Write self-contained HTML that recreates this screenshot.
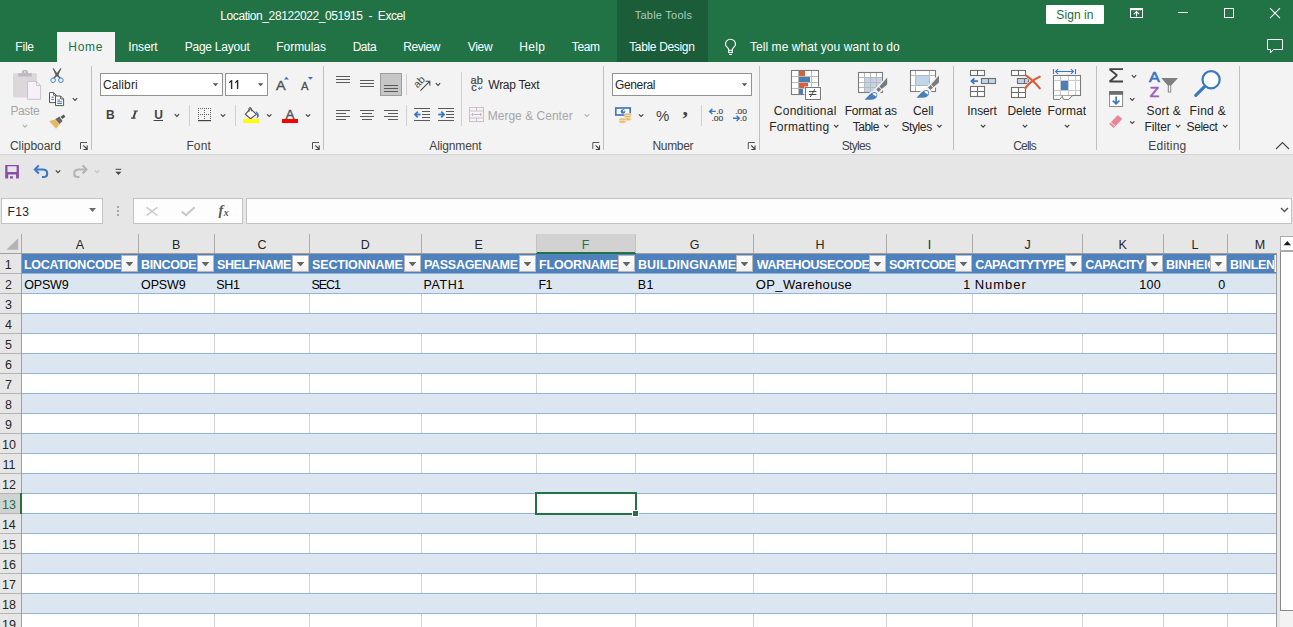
<!DOCTYPE html>
<html>
<head>
<meta charset="utf-8">
<title>Excel</title>
<style>
html,body{margin:0;padding:0;}
body{width:1293px;height:627px;overflow:hidden;position:relative;background:#e6e6e6;font-family:"Liberation Sans",sans-serif;font-size:12px;color:#262626;}
.t{position:absolute;white-space:nowrap;line-height:16px;height:16px;}
.b{position:absolute;}
svg{position:absolute;overflow:visible;}
.sep{position:absolute;width:1px;background:#bebebe;top:66px;height:84px;}
.sp2{position:absolute;width:1px;background:#d0d0d0;top:105px;height:21px;}
.combo{position:absolute;background:#fff;border:1px solid #939393;box-sizing:border-box;top:73px;height:23px;}
.fbox{position:absolute;background:#fdfdfd;border:1px solid #c3c3c3;box-sizing:border-box;top:198px;height:26px;}
.fb{position:absolute;top:255px;width:17px;height:17px;background:linear-gradient(#ffffff,#f1f1f1);border:1px solid #b9b9b9;box-sizing:border-box;}
.fb:after{content:"";position:absolute;left:3.6px;top:6px;width:7.8px;height:4.4px;background:#666;clip-path:polygon(0 0,100% 0,50% 100%);}
</style>
</head>
<body>
<!-- title / tabs -->
<div class="b" style="left:0;top:0;width:1293px;height:62px;background:#217346;"></div>
<div class="b" style="left:617px;top:0;width:91px;height:62px;background:#1b5d39;"></div>
<div class="b" style="left:57px;top:32px;width:58px;height:30px;background:#f3f3f3;"></div>
<div class="b" style="left:1046px;top:5px;width:58px;height:19px;background:#fff;border-radius:1px;"></div>
<!-- ribbon -->
<div class="b" style="left:0;top:62px;width:1293px;height:92px;background:#f3f3f3;"></div>
<div class="b" style="left:0;top:154px;width:1293px;height:1px;background:#d4d4d4;"></div>
<div class="sep" style="left:91px"></div>
<div class="sep" style="left:323px"></div>
<div class="sep" style="left:603px"></div>
<div class="sep" style="left:759px"></div>
<div class="sep" style="left:953px"></div>
<div class="sep" style="left:1096px"></div>
<div class="sep" style="left:1239px"></div>
<div class="sp2" style="left:189px"></div>
<div class="sp2" style="left:235px"></div>
<div class="sp2" style="left:406px;top:74px;"></div>
<div class="sp2" style="left:406px;"></div>
<div class="sp2" style="left:461px;top:72px;height:54px;"></div>
<div class="sp2" style="left:701px"></div>
<div class="combo" style="left:100px;width:123px;"></div>
<div class="combo" style="left:225px;width:43px;"></div>
<div class="combo" style="left:612px;width:140px;"></div>
<div class="b" style="left:380px;top:73px;width:22px;height:23px;background:#c6c6c6;border:1px solid #9d9d9d;box-sizing:border-box;"></div>
<!-- formula bar -->
<div class="fbox" style="left:1px;width:102px;"></div>
<div class="fbox" style="left:133px;width:110px;"></div>
<div class="fbox" style="left:246px;width:1046px;"></div>
<div style="position:absolute;left:22px;top:254px;width:1254px;height:373px;background:#fff;"></div>
<div style="position:absolute;left:537px;top:234px;width:98px;height:18px;background:#d2d2d2;"></div>
<div style="position:absolute;left:536px;top:252px;width:100px;height:2px;background:#217346;"></div>
<div style="position:absolute;left:0;top:253px;width:536px;height:1px;background:#9f9f9f;"></div>
<div style="position:absolute;left:636px;top:253px;width:641px;height:1px;background:#9f9f9f;"></div>
<div style="position:absolute;left:21px;top:234px;width:1px;height:19px;background:#ababab;"></div>
<div style="position:absolute;left:138px;top:234px;width:1px;height:19px;background:#ababab;"></div>
<div style="position:absolute;left:214px;top:234px;width:1px;height:19px;background:#ababab;"></div>
<div style="position:absolute;left:309px;top:234px;width:1px;height:19px;background:#ababab;"></div>
<div style="position:absolute;left:421px;top:234px;width:1px;height:19px;background:#ababab;"></div>
<div style="position:absolute;left:536px;top:234px;width:1px;height:19px;background:#c2c2c2;"></div>
<div style="position:absolute;left:635px;top:234px;width:1px;height:19px;background:#c2c2c2;"></div>
<div style="position:absolute;left:753px;top:234px;width:1px;height:19px;background:#ababab;"></div>
<div style="position:absolute;left:886px;top:234px;width:1px;height:19px;background:#ababab;"></div>
<div style="position:absolute;left:972px;top:234px;width:1px;height:19px;background:#ababab;"></div>
<div style="position:absolute;left:1082px;top:234px;width:1px;height:19px;background:#ababab;"></div>
<div style="position:absolute;left:1163px;top:234px;width:1px;height:19px;background:#ababab;"></div>
<div style="position:absolute;left:1227px;top:234px;width:1px;height:19px;background:#ababab;"></div>
<div style="position:absolute;left:21px;top:254px;width:1px;height:373px;background:#9f9f9f;"></div>
<svg style="left:0;top:236px" width="22" height="18"><path d="M18.2 2.3 L18.2 13.8 L6.3 13.8 Z" fill="#b3b3b3"/></svg>
<div style="position:absolute;left:0;top:273px;width:21px;height:1px;background:#b4b4b4;"></div>
<div style="position:absolute;left:0;top:293px;width:21px;height:1px;background:#b4b4b4;"></div>
<div style="position:absolute;left:0;top:313px;width:21px;height:1px;background:#b4b4b4;"></div>
<div style="position:absolute;left:0;top:333px;width:21px;height:1px;background:#b4b4b4;"></div>
<div style="position:absolute;left:0;top:353px;width:21px;height:1px;background:#b4b4b4;"></div>
<div style="position:absolute;left:0;top:373px;width:21px;height:1px;background:#b4b4b4;"></div>
<div style="position:absolute;left:0;top:393px;width:21px;height:1px;background:#b4b4b4;"></div>
<div style="position:absolute;left:0;top:413px;width:21px;height:1px;background:#b4b4b4;"></div>
<div style="position:absolute;left:0;top:433px;width:21px;height:1px;background:#b4b4b4;"></div>
<div style="position:absolute;left:0;top:453px;width:21px;height:1px;background:#b4b4b4;"></div>
<div style="position:absolute;left:0;top:473px;width:21px;height:1px;background:#b4b4b4;"></div>
<div style="position:absolute;left:0;top:493px;width:21px;height:1px;background:#b4b4b4;"></div>
<div style="position:absolute;left:0;top:513px;width:21px;height:1px;background:#b4b4b4;"></div>
<div style="position:absolute;left:0;top:533px;width:21px;height:1px;background:#b4b4b4;"></div>
<div style="position:absolute;left:0;top:553px;width:21px;height:1px;background:#b4b4b4;"></div>
<div style="position:absolute;left:0;top:573px;width:21px;height:1px;background:#b4b4b4;"></div>
<div style="position:absolute;left:0;top:593px;width:21px;height:1px;background:#b4b4b4;"></div>
<div style="position:absolute;left:0;top:613px;width:21px;height:1px;background:#b4b4b4;"></div>
<div style="position:absolute;left:0;top:494px;width:20px;height:19px;background:#d2d2d2;"></div>
<div style="position:absolute;left:20px;top:493px;width:2px;height:21px;background:#217346;"></div>
<div style="position:absolute;left:138px;top:274px;width:1px;height:353px;background:#d4d4d4;"></div>
<div style="position:absolute;left:214px;top:274px;width:1px;height:353px;background:#d4d4d4;"></div>
<div style="position:absolute;left:309px;top:274px;width:1px;height:353px;background:#d4d4d4;"></div>
<div style="position:absolute;left:421px;top:274px;width:1px;height:353px;background:#d4d4d4;"></div>
<div style="position:absolute;left:536px;top:274px;width:1px;height:353px;background:#d4d4d4;"></div>
<div style="position:absolute;left:635px;top:274px;width:1px;height:353px;background:#d4d4d4;"></div>
<div style="position:absolute;left:753px;top:274px;width:1px;height:353px;background:#d4d4d4;"></div>
<div style="position:absolute;left:886px;top:274px;width:1px;height:353px;background:#d4d4d4;"></div>
<div style="position:absolute;left:972px;top:274px;width:1px;height:353px;background:#d4d4d4;"></div>
<div style="position:absolute;left:1082px;top:274px;width:1px;height:353px;background:#d4d4d4;"></div>
<div style="position:absolute;left:1163px;top:274px;width:1px;height:353px;background:#d4d4d4;"></div>
<div style="position:absolute;left:1227px;top:274px;width:1px;height:353px;background:#d4d4d4;"></div>
<div style="position:absolute;left:22px;top:254px;width:1254px;height:19px;background:#4f81bd;"></div>
<div style="position:absolute;left:22px;top:273px;width:1254px;height:19px;background:#dce6f1;border-top:1px solid #95b3d7;border-bottom:1px solid #95b3d7;"></div>
<div style="position:absolute;left:22px;top:313px;width:1254px;height:19px;background:#dce6f1;border-top:1px solid #95b3d7;border-bottom:1px solid #95b3d7;"></div>
<div style="position:absolute;left:22px;top:353px;width:1254px;height:19px;background:#dce6f1;border-top:1px solid #95b3d7;border-bottom:1px solid #95b3d7;"></div>
<div style="position:absolute;left:22px;top:393px;width:1254px;height:19px;background:#dce6f1;border-top:1px solid #95b3d7;border-bottom:1px solid #95b3d7;"></div>
<div style="position:absolute;left:22px;top:433px;width:1254px;height:19px;background:#dce6f1;border-top:1px solid #95b3d7;border-bottom:1px solid #95b3d7;"></div>
<div style="position:absolute;left:22px;top:473px;width:1254px;height:19px;background:#dce6f1;border-top:1px solid #95b3d7;border-bottom:1px solid #95b3d7;"></div>
<div style="position:absolute;left:22px;top:513px;width:1254px;height:19px;background:#dce6f1;border-top:1px solid #95b3d7;border-bottom:1px solid #95b3d7;"></div>
<div style="position:absolute;left:22px;top:553px;width:1254px;height:19px;background:#dce6f1;border-top:1px solid #95b3d7;border-bottom:1px solid #95b3d7;"></div>
<div style="position:absolute;left:22px;top:593px;width:1254px;height:19px;background:#dce6f1;border-top:1px solid #95b3d7;border-bottom:1px solid #95b3d7;"></div>
<div class="fb" style="left:121px;"></div>
<div class="fb" style="left:197px;"></div>
<div class="fb" style="left:292px;"></div>
<div class="fb" style="left:404px;"></div>
<div class="fb" style="left:519px;"></div>
<div class="fb" style="left:618px;"></div>
<div class="fb" style="left:736px;"></div>
<div class="fb" style="left:869px;"></div>
<div class="fb" style="left:955px;"></div>
<div class="fb" style="left:1065px;"></div>
<div class="fb" style="left:1146px;"></div>
<div class="fb" style="left:1210px;"></div>
<div style="position:absolute;left:1274px;top:255px;width:2px;height:17px;background:#fafafa;border-left:1px solid #c4c4c4;box-sizing:border-box;"></div>
<div style="position:absolute;left:1276px;top:253px;width:1px;height:374px;background:#9f9f9f;"></div>
<div style="position:absolute;left:535px;top:492px;width:98px;height:19px;border:2px solid #217346;"></div>
<div style="position:absolute;left:632px;top:510px;width:5px;height:5px;background:#217346;border:1px solid #fff;"></div>
<div style="position:absolute;left:1280px;top:251px;width:13px;height:360px;background:#fff;border-left:1px solid #8a8a8a;border-top:1px solid #ababab;border-bottom:1px solid #8a8a8a;box-sizing:border-box;"></div>
<div style="position:absolute;left:1280px;top:611px;width:13px;height:16px;background:#f3f3f3;"></div>
<div style="position:absolute;left:1280px;top:236px;width:14px;height:15px;background:#fff;border:1px solid #ababab;box-sizing:border-box;"></div>
<svg style="left:1280px;top:236px" width="13" height="15"><path d="M3.6 9.2 L11 9.2 L7.3 5 Z" fill="#1a1a1a"/></svg>
<svg style="left:0;top:0" width="1293" height="627" viewBox="0 0 1293 627">
<rect x="1130.5" y="8.5" width="12" height="9" fill="none" stroke="#ffffff" stroke-width="1"/>
<rect x="1130" y="8" width="13" height="2.2" fill="#ffffff"/>
<path d="M1136.5 16.6 L1136.5 11.8 M1133.9 14.2 L1136.5 11.6 L1139.1 14.2" fill="none" stroke="#ffffff" stroke-width="1.1"/>
<rect x="1178" y="12" width="10" height="1" fill="#ffffff"/>
<rect x="1224.5" y="8.5" width="9" height="9" fill="none" stroke="#ffffff" stroke-width="1"/>
<path d="M1270 8.2 L1280 18.2 M1280 8.2 L1270 18.2" fill="none" stroke="#ffffff" stroke-width="1.1"/>
<path d="M1267.5 39.5 L1282.5 39.5 L1282.5 49.5 L1273.5 49.5 L1270.5 52.8 L1270.5 49.5 L1267.5 49.5 Z" fill="none" stroke="#ffffff" stroke-width="1"/>
<path d="M728.7 50.4 L728.7 49.6 C728.4 47.6 725.5 46.8 725.5 44.2 A5 5 0 1 1 735.5 44.2 C735.5 46.8 732.6 47.6 732.3 49.6 L732.3 50.4" fill="none" stroke="#ffffff" stroke-width="1.15"/>
<rect x="728.7" y="50.3" width="3.6" height="2.3" fill="none" stroke="#ffffff" stroke-width="1.05"/>
<path d="M729.2 54.5 L731.9 54.5" fill="none" stroke="#ffffff" stroke-width="1"/>
<rect x="13" y="73.2" width="23.8" height="24.3" rx="1" fill="#dbd7db"/>
<path d="M18.2 73.2 L31.8 73.2 L31.8 76.5 L18.2 76.5 Z" fill="#bdb9bd"/>
<path d="M22 73.4 L22 71.8 Q22 70.1 23.7 70.1 L26.2 70.1 Q27.9 70.1 27.9 71.8 L27.9 73.4 Z M24 71.6 L24 72.6 L25.9 72.6 L25.9 71.6 Z" fill="#bdb9bd" fill-rule="evenodd"/>
<path d="M27.5 81.4 L36.5 81.4 L40.6 85.5 L40.6 99.3 L27.5 99.3 Z" fill="#f6f1f8" stroke="#c9c5c9" stroke-width="1"/>
<path d="M36.5 81.4 L36.5 85.5 L40.6 85.5" fill="none" stroke="#c9c5c9" stroke-width="1"/>
<path d="M22.80 124.90 L25.00 127.10 L27.20 124.90" fill="none" stroke="#b1b1b1" stroke-width="1.2"/>
<path d="M52.5 68.2 L53.6 68.2 L58.6 75.2 L60.8 78 L59.6 78.6 L55.6 75 Z" fill="#5c5c5c"/>
<path d="M61.5 68.2 L60.4 68.2 L55.4 75.2 L53.2 78 L54.4 78.6 L58.4 75 Z" fill="#5c5c5c"/>
<circle cx="53.1" cy="80.2" r="2.3" fill="none" stroke="#3f7fc8" stroke-width="1"/>
<circle cx="60.9" cy="80.2" r="2.3" fill="none" stroke="#3f7fc8" stroke-width="1"/>
<path d="M49.5 92.6 L53.6 92.6 L56.3 95.3 L56.3 102.6 L49.5 102.6 Z" fill="#fff" stroke="#555" stroke-width="1"/>
<path d="M53.6 92.6 L53.6 95.3 L56.3 95.3" fill="none" stroke="#555" stroke-width="0.9"/>
<path d="M51.3 97.2 L54 97.2 M51.3 99.6 L54 99.6" stroke="#3b78c3" stroke-width="1" fill="none"/>
<path d="M55.5 96 L60.6 96 L63.6 99 L63.6 105.6 L55.5 105.6 Z" fill="#fff" stroke="#555" stroke-width="1"/>
<path d="M60.6 96 L60.6 99 L63.6 99" fill="none" stroke="#555" stroke-width="0.9"/>
<path d="M57.3 100 L60 100 M57.3 101.8 L62 101.8 M57.3 103.6 L62 103.6" stroke="#3b78c3" stroke-width="1" fill="none"/>
<path d="M72.80 98.10 L75.00 100.30 L77.20 98.10" fill="none" stroke="#444444" stroke-width="1.2"/>
<path d="M49.2 120.9 L54.8 119.6 L59.8 124.2 L56 128.8 Z" fill="#e9b765"/>
<path d="M55.2 119.2 L59.4 116.6 L62.6 121 L59.6 124 Z" fill="#686868"/>
<path d="M60.6 116.8 L63.8 114.6 L65.4 116.8 L62.2 119 Z" fill="#555"/>
<path d="M80.5 149 L80.5 142.5 L87 142.5" fill="none" stroke="#555" stroke-width="1"/>
<path d="M83.3 145.3 L87 149 M87.2 145.6 L87.2 149.5 L83.4 149.5" fill="none" stroke="#444" stroke-width="1.1"/>
<path d="M212.80 83.20 L218.20 83.20 L215.50 86.20 Z" fill="#555"/>
<path d="M257.90 83.20 L263.30 83.20 L260.60 86.20 Z" fill="#555"/>
<path d="M228.9 82.3 L231.1 80 L232.3 80 L232.3 89 L230.9 89 L230.9 81.9 L229.5 83.3 Z" fill="#2b2b2b"/>
<path d="M234.9 82.3 L237.1 80 L238.3 80 L238.3 89 L236.9 89 L236.9 81.9 L235.5 83.3 Z" fill="#2b2b2b"/>
<text x="276.1" y="89.8" font-family="Liberation Sans" font-size="13.6" fill="#505050" stroke="#505050" stroke-width="0.35" textLength="9.6" lengthAdjust="spacingAndGlyphs">A</text>
<path d="M283.9 79.6 L288.9 79.6 L286.4 76.8 Z" fill="#3b78c3"/>
<text x="301.1" y="89.8" font-family="Liberation Sans" font-size="10.6" fill="#505050" stroke="#505050" stroke-width="0.3" textLength="7.5" lengthAdjust="spacingAndGlyphs">A</text>
<path d="M307.8 77 L313 77 L310.4 79.8 Z" fill="#3b78c3"/>
<path d="M133.6 110.4 L138 110.4 L138 111.6 L136.6 111.6 L134.5 117.6 L135.6 117.6 L135.6 118.8 L131 118.8 L131 117.6 L132.5 117.6 L134.6 111.6 L133.6 111.6 Z" fill="#444"/>
<rect x="153.6" y="120" width="9.4" height="1" fill="#444444"/>
<path d="M174.70 114.20 L176.90 116.40 L179.10 114.20" fill="none" stroke="#444444" stroke-width="1.2"/>
<path d="M198 108.5 L211 108.5" stroke="#666" stroke-width="1" stroke-dasharray="1 1" fill="none"/>
<path d="M198 114.5 L211 114.5" stroke="#666" stroke-width="1" stroke-dasharray="1 1" fill="none"/>
<path d="M198.5 108 L198.5 120" stroke="#666" stroke-width="1" stroke-dasharray="1 1" fill="none"/>
<path d="M204.5 108 L204.5 120" stroke="#666" stroke-width="1" stroke-dasharray="1 1" fill="none"/>
<path d="M210.5 108 L210.5 120" stroke="#666" stroke-width="1" stroke-dasharray="1 1" fill="none"/>
<rect x="198" y="120" width="13" height="1.2" fill="#444"/>
<path d="M220.80 114.30 L223.00 116.50 L225.20 114.30" fill="none" stroke="#444444" stroke-width="1.2"/>
<path d="M250.4 108.6 L256.4 114.3 L250.6 118.7 L245.3 114.3 Z" fill="#fff" stroke="#555" stroke-width="1.15" stroke-linejoin="round"/>
<path d="M248.9 112 L248.9 108.6 Q248.9 107.6 249.9 107.6 L250.4 107.6 Q251.4 107.6 251.4 108.6 L251.4 111.4" fill="none" stroke="#555" stroke-width="1"/>
<path d="M255.6 111.2 Q259.2 112.6 258.8 116 Q258.4 117.8 256.8 118.2 Q257.8 115 255.6 111.2 Z" fill="#3b78c3"/>
<rect x="243" y="119" width="16" height="4" fill="#ffff00"/>
<path d="M267.00 114.30 L269.20 116.50 L271.40 114.30" fill="none" stroke="#444444" stroke-width="1.2"/>
<text x="285.6" y="118.8" font-family="Liberation Sans" font-size="13.2" fill="#505050" stroke="#505050" stroke-width="0.35" textLength="9" lengthAdjust="spacingAndGlyphs">A</text>
<rect x="282" y="119" width="16" height="4" fill="#ff0000"/>
<path d="M305.80 114.30 L308.00 116.50 L310.20 114.30" fill="none" stroke="#444444" stroke-width="1.2"/>
<path d="M312.5 149 L312.5 142.5 L319 142.5" fill="none" stroke="#555" stroke-width="1"/>
<path d="M315.3 145.3 L319 149 M319.2 145.6 L319.2 149.5 L315.4 149.5" fill="none" stroke="#444" stroke-width="1.1"/>
<rect x="336" y="76" width="14" height="1" fill="#5a5a5a"/>
<rect x="336" y="79" width="14" height="1" fill="#5a5a5a"/>
<rect x="336" y="82" width="14" height="1" fill="#5a5a5a"/>
<rect x="360" y="80" width="14" height="1" fill="#5a5a5a"/>
<rect x="360" y="83" width="14" height="1" fill="#5a5a5a"/>
<rect x="360" y="86" width="14" height="1" fill="#5a5a5a"/>
<rect x="384" y="85" width="14" height="1" fill="#5a5a5a"/>
<rect x="384" y="88" width="14" height="1" fill="#5a5a5a"/>
<rect x="384" y="91" width="14" height="1" fill="#5a5a5a"/>
<rect x="336" y="110" width="14" height="1" fill="#5a5a5a"/>
<rect x="360" y="110" width="14" height="1" fill="#5a5a5a"/>
<rect x="384" y="110" width="14" height="1" fill="#5a5a5a"/>
<rect x="336" y="113" width="10" height="1" fill="#5a5a5a"/>
<rect x="362" y="113" width="10" height="1" fill="#5a5a5a"/>
<rect x="388" y="113" width="10" height="1" fill="#5a5a5a"/>
<rect x="336" y="116" width="14" height="1" fill="#5a5a5a"/>
<rect x="360" y="116" width="14" height="1" fill="#5a5a5a"/>
<rect x="384" y="116" width="14" height="1" fill="#5a5a5a"/>
<rect x="336" y="119" width="10" height="1" fill="#5a5a5a"/>
<rect x="362" y="119" width="10" height="1" fill="#5a5a5a"/>
<rect x="388" y="119" width="10" height="1" fill="#5a5a5a"/>
<text x="0" y="0" transform="translate(417.4,88.4) rotate(-45)" font-family="Liberation Sans" font-size="10.5" fill="#4a4a4a">ab</text>
<path d="M420.4 90.6 L429.4 81.6 M425.6 81.2 L429.8 81.2 L429.8 85.4" fill="none" stroke="#4a4a4a" stroke-width="1.1"/>
<path d="M435.80 83.20 L438.00 85.40 L440.20 83.20" fill="none" stroke="#444444" stroke-width="1.2"/>
<rect x="414" y="108" width="16" height="1" fill="#5a5a5a"/>
<rect x="414" y="120" width="16" height="1" fill="#5a5a5a"/>
<rect x="422" y="111" width="8" height="1" fill="#5a5a5a"/>
<rect x="422" y="114" width="8" height="1" fill="#5a5a5a"/>
<rect x="422" y="117" width="8" height="1" fill="#5a5a5a"/>
<path d="M420.6 114.5 L415.4 114.5" fill="none" stroke="#3b78c3" stroke-width="1.8"/>
<path d="M417.8 111.7 L415 114.5 L417.8 117.3" fill="none" stroke="#3b78c3" stroke-width="1.8"/>
<rect x="438" y="108" width="16" height="1" fill="#5a5a5a"/>
<rect x="438" y="120" width="16" height="1" fill="#5a5a5a"/>
<rect x="446" y="111" width="8" height="1" fill="#5a5a5a"/>
<rect x="446" y="114" width="8" height="1" fill="#5a5a5a"/>
<rect x="446" y="117" width="8" height="1" fill="#5a5a5a"/>
<path d="M438.2 114.5 L443.6 114.5" fill="none" stroke="#3b78c3" stroke-width="1.8"/>
<path d="M441.2 111.7 L444 114.5 L441.2 117.3" fill="none" stroke="#3b78c3" stroke-width="1.8"/>
<text x="470.6" y="83.7" font-family="Liberation Sans" font-size="10.8" fill="#4a4a4a" stroke="#4a4a4a" stroke-width="0.25" textLength="12.2" lengthAdjust="spacingAndGlyphs">ab</text>
<text x="471.2" y="90.7" font-family="Liberation Sans" font-size="10.8" fill="#4a4a4a" stroke="#4a4a4a" stroke-width="0.25">c</text>
<path d="M481.8 86.2 L481.8 88.4 L478.4 88.4 M479.9 86.9 L478.3 88.4 L479.9 89.9" fill="none" stroke="#3b78c3" stroke-width="1"/>
<rect x="469.5" y="107.5" width="14" height="14" fill="#f6f2f6" stroke="#c9c0c9" stroke-width="1"/>
<path d="M469.5 111 L483.5 111 M469.5 118 L483.5 118 M476.5 107.5 L476.5 111 M476.5 118 L476.5 121.5" fill="none" stroke="#c9c0c9" stroke-width="1"/>
<path d="M471.5 114.5 L481.5 114.5 M473 113 L471.5 114.5 L473 116 M480 113 L481.5 114.5 L480 116" fill="none" stroke="#bdbdbd" stroke-width="1"/>
<path d="M584.70 114.30 L586.90 116.50 L589.10 114.30" fill="none" stroke="#b1b1b1" stroke-width="1.2"/>
<path d="M592.8 149 L592.8 142.5 L599.3 142.5" fill="none" stroke="#555" stroke-width="1"/>
<path d="M595.5999999999999 145.3 L599.3 149 M599.5 145.6 L599.5 149.5 L595.6999999999999 149.5" fill="none" stroke="#444" stroke-width="1.1"/>
<path d="M741.80 83.20 L747.20 83.20 L744.50 86.20 Z" fill="#555"/>
<rect x="615.8" y="108" width="14.4" height="7" fill="#fff" stroke="#3b78c3" stroke-width="1.7"/>
<circle cx="623" cy="111.5" r="2.3" fill="#3b78c3"/>
<path d="M623 110 L624.6 110 L624.6 111.5 L623 111.5 Z" fill="#fff"/>
<ellipse cx="627.7" cy="114.6" rx="3.5" ry="1.5" fill="#e9b96e" stroke="#f6ead6" stroke-width="0.7"/>
<ellipse cx="627.7" cy="116.9" rx="3.5" ry="1.5" fill="#e9b96e" stroke="#f6ead6" stroke-width="0.7"/>
<ellipse cx="627.7" cy="119.2" rx="3.5" ry="1.5" fill="#e9b96e" stroke="#f6ead6" stroke-width="0.7"/>
<ellipse cx="622.4" cy="119.4" rx="3.5" ry="1.5" fill="#e9b96e" stroke="#f6ead6" stroke-width="0.7"/>
<ellipse cx="622.4" cy="121.7" rx="3.5" ry="1.5" fill="#e9b96e" stroke="#f6ead6" stroke-width="0.7"/>
<path d="M638.90 114.30 L641.10 116.50 L643.30 114.30" fill="none" stroke="#444444" stroke-width="1.2"/>
<path d="M715.8 111.4 L709.8 111.4 M712.4 108.8 L709.6 111.4 L712.4 114" fill="none" stroke="#3b78c3" stroke-width="1.4"/>
<text x="716.2" y="113.8" font-family="Liberation Sans" font-size="8" fill="#4a4a4a" stroke="#4a4a4a" stroke-width="0.2" textLength="6.8" lengthAdjust="spacingAndGlyphs">.0</text>
<text x="711.4" y="121.1" font-family="Liberation Sans" font-size="8" fill="#4a4a4a" stroke="#4a4a4a" stroke-width="0.2" textLength="11.8" lengthAdjust="spacingAndGlyphs">.00</text>
<text x="735.2" y="113.8" font-family="Liberation Sans" font-size="8" fill="#4a4a4a" stroke="#4a4a4a" stroke-width="0.2" textLength="11.8" lengthAdjust="spacingAndGlyphs">.00</text>
<path d="M733 118.3 L739.2 118.3 M736.6 115.7 L739.4 118.3 L736.6 120.9" fill="none" stroke="#3b78c3" stroke-width="1.4"/>
<text x="740" y="121.1" font-family="Liberation Sans" font-size="8" fill="#4a4a4a" stroke="#4a4a4a" stroke-width="0.2" textLength="6.8" lengthAdjust="spacingAndGlyphs">.0</text>
<path d="M748.3 149 L748.3 142.5 L754.8 142.5" fill="none" stroke="#555" stroke-width="1"/>
<path d="M751.0999999999999 145.3 L754.8 149 M755.0 145.6 L755.0 149.5 L751.1999999999999 149.5" fill="none" stroke="#444" stroke-width="1.1"/>
<rect x="791.5" y="70.5" width="27" height="24" fill="#fff"/>
<rect x="799" y="71" width="6" height="5.5" fill="#d9603b"/>
<rect x="799" y="77" width="11" height="5.5" fill="#4a7ebb"/>
<rect x="799" y="83" width="9" height="5.5" fill="#d9603b"/>
<rect x="799" y="89" width="4" height="5.5" fill="#4a7ebb"/>
<path d="M798.5 70.5 L798.5 94.5 M811.5 70.5 L811.5 94.5 M791.5 76.5 L818.5 76.5 M791.5 82.5 L818.5 82.5 M791.5 88.5 L818.5 88.5" fill="none" stroke="#b9b9b9" stroke-width="1"/>
<rect x="791.5" y="70.5" width="27" height="24" fill="none" stroke="#7c7c7c" stroke-width="1.1"/>
<rect x="804.5" y="86.5" width="17" height="14" fill="#fff"/>
<rect x="805.5" y="87.5" width="15" height="12" fill="#fff" stroke="#777" stroke-width="1"/>
<path d="M809 91.6 L816.4 91.6 M809 94.5 L816.4 94.5 M814.8 89.2 L810.2 97" fill="none" stroke="#444" stroke-width="1"/>
<path d="M834.00 124.90 L836.20 127.10 L838.40 124.90" fill="none" stroke="#444444" stroke-width="1.2"/>
<rect x="858.5" y="72.5" width="24" height="20" fill="#fff"/>
<rect x="865" y="78" width="17.5" height="14.5" fill="#c0d5ec"/>
<path d="M864.5 72.5 L864.5 92.5 M870.5 72.5 L870.5 92.5 M876.5 72.5 L876.5 92.5 M858.5 77.5 L882.5 77.5 M858.5 82.5 L882.5 82.5 M858.5 87.5 L882.5 87.5" fill="none" stroke="#b9b9b9" stroke-width="1"/>
<rect x="858.5" y="72.5" width="24" height="20" fill="none" stroke="#7c7c7c" stroke-width="1.1"/>
<path d="M887.6 76.6 L887.6 85 L878.6 93.2 L875 90 Z" fill="#f3f3f3" stroke="#f3f3f3" stroke-width="1.6"/>
<path d="M863.6 100.2 L869 94 Q873.4 89.6 877 92.2 Q880 96 875.4 99.4 Q873 100.6 869 100.2 Z" fill="#f3f3f3" stroke="#f3f3f3" stroke-width="1.6"/>
<path d="M887.2 77.6 L887.2 84.6 L881.8 89 L879.4 86.4 Z" fill="#7a7a7a"/>
<path d="M878.8 87 L881.2 89.6 L878.6 92 L876.2 89.4 Z" fill="#7a7a7a"/>
<path d="M864.6 99.7 L869.6 94.6 Q873.4 90.6 876.4 92.8 Q879 95.8 875 98.8 Q873 100 869 99.7 Z" fill="#4a7ebb"/>
<path d="M872.4 93.6 Q874.6 92.2 876 93.6 Q877.4 95.4 876 96.8 L875 95.4 L873.8 95.2 Z" fill="#fff"/>
<path d="M884.10 124.90 L886.30 127.10 L888.50 124.90" fill="none" stroke="#444444" stroke-width="1.2"/>
<rect x="910.5" y="70.5" width="25" height="21" fill="#fff"/>
<rect x="916" y="76" width="13.5" height="9.5" fill="#c0d5ec"/>
<path d="M915.5 70.5 L915.5 91.5 M929.5 70.5 L929.5 91.5 M910.5 75.5 L935.5 75.5 M910.5 85.5 L935.5 85.5" fill="none" stroke="#b9b9b9" stroke-width="1"/>
<rect x="910.5" y="70.5" width="25" height="21" fill="none" stroke="#7c7c7c" stroke-width="1.1"/>
<path d="M939.4 74.6 L939.4 83 L930.4 91.2 L926.8 88 Z" fill="#f3f3f3" stroke="#f3f3f3" stroke-width="1.6"/>
<path d="M915.4 98.2 L920.8 92 Q925.1999999999999 87.6 928.8 90.2 Q931.8 94 927.1999999999999 97.4 Q924.8 98.6 920.8 98.2 Z" fill="#f3f3f3" stroke="#f3f3f3" stroke-width="1.6"/>
<path d="M939.0 75.6 L939.0 82.6 L933.5999999999999 87 L931.1999999999999 84.4 Z" fill="#7a7a7a"/>
<path d="M930.5999999999999 85 L933.0 87.6 L930.4 90 L928.0 87.4 Z" fill="#7a7a7a"/>
<path d="M916.4 97.7 L921.4 92.6 Q925.1999999999999 88.6 928.1999999999999 90.8 Q930.8 93.8 926.8 96.8 Q924.8 98 920.8 97.7 Z" fill="#4a7ebb"/>
<path d="M924.1999999999999 91.6 Q926.4 90.2 927.8 91.6 Q929.1999999999999 93.4 927.8 94.8 L926.8 93.4 L925.5999999999999 93.2 Z" fill="#fff"/>
<path d="M937.20 124.90 L939.40 127.10 L941.60 124.90" fill="none" stroke="#444444" stroke-width="1.2"/>
<rect x="970.5" y="70.5" width="14" height="5" fill="#fff" stroke="#6f6f6f" stroke-width="1.1"/>
<path d="M977.5 70.5 L977.5 75.5" stroke="#6f6f6f" stroke-width="1.1" fill="none"/>
<rect x="981.5" y="78.5" width="14" height="5" fill="#c0d5ec" stroke="#6f6f6f" stroke-width="1.1"/>
<path d="M988.5 78.5 L988.5 83.5" stroke="#6f6f6f" stroke-width="1.1" fill="none"/>
<rect x="970.5" y="86.5" width="14" height="10" fill="#fff" stroke="#6f6f6f" stroke-width="1.1"/>
<path d="M977.5 86.5 L977.5 96.5" stroke="#6f6f6f" stroke-width="1.1" fill="none"/>
<path d="M970.5 91.5 L984.5 91.5" stroke="#6f6f6f" stroke-width="1.1" fill="none"/>
<path d="M978 81.1 L971.6 81.1 M974.4 78.4 L971.4 81.1 L974.4 83.8" fill="none" stroke="#3b78c3" stroke-width="1.7"/>
<path d="M980.90 124.90 L983.10 127.10 L985.30 124.90" fill="none" stroke="#444444" stroke-width="1.2"/>
<rect x="1011.5" y="70.5" width="14" height="5" fill="#fff" stroke="#6f6f6f" stroke-width="1.1"/>
<path d="M1018.5 70.5 L1018.5 75.5" stroke="#6f6f6f" stroke-width="1.1" fill="none"/>
<rect x="1017.5" y="78.5" width="11" height="5" fill="#c0d5ec" stroke="#6f6f6f" stroke-width="1.1"/>
<path d="M1024.5 78.5 L1024.5 83.5" stroke="#6f6f6f" stroke-width="1.1" fill="none"/>
<rect x="1011.5" y="87.5" width="14" height="10" fill="#fff" stroke="#6f6f6f" stroke-width="1.1"/>
<path d="M1018.5 87.5 L1018.5 97.5" stroke="#6f6f6f" stroke-width="1.1" fill="none"/>
<path d="M1011.5 92.5 L1025.5 92.5" stroke="#6f6f6f" stroke-width="1.1" fill="none"/>
<path d="M1026.6 75.8 Q1033 80 1039.8 88.4 M1039.8 76.8 Q1031 80.6 1025.4 88" fill="none" stroke="#f3f3f3" stroke-width="3.4"/>
<path d="M1026.6 75.8 Q1033 80 1039.8 88.4 M1039.8 76.8 Q1031 80.6 1025.4 88" fill="none" stroke="#d9603b" stroke-width="2.2" stroke-linecap="round"/>
<path d="M1022.80 124.90 L1025.00 127.10 L1027.20 124.90" fill="none" stroke="#444444" stroke-width="1.2"/>
<path d="M1053.5 69 L1053.5 74 M1075.5 69 L1075.5 74 M1055.6 71.5 L1073.4 71.5 M1058 69.2 L1055.6 71.5 L1058 73.8 M1071 69.2 L1073.4 71.5 L1071 73.8" fill="none" stroke="#3b78c3" stroke-width="1.1"/>
<rect x="1053.5" y="75.5" width="27" height="20" fill="#fff"/>
<path d="M1060.5 75.5 L1060.5 95.5 M1068.5 75.5 L1068.5 95.5 M1075.5 75.5 L1075.5 95.5 M1053.5 80.5 L1080.5 80.5 M1053.5 90.5 L1080.5 90.5" fill="none" stroke="#c9c9c9" stroke-width="1"/>
<rect x="1061" y="81" width="7" height="9" fill="#4a7ebb"/>
<rect x="1053.5" y="75.5" width="27" height="20" fill="none" stroke="#7c7c7c" stroke-width="1.1"/>
<path d="M1053.5 95.5 L1053.5 99.4 L1059.6 99.4 L1062.2 96.4 L1063.6 99.4 L1068.8 99.4 L1072.4 95.8" fill="#fff" stroke="#7c7c7c" stroke-width="1"/>
<path d="M1062.2 96.4 L1062.2 95.6" fill="none" stroke="#7c7c7c" stroke-width="1"/>
<path d="M1064.90 124.90 L1067.10 127.10 L1069.30 124.90" fill="none" stroke="#444444" stroke-width="1.2"/>
<path d="M1123 69.2 L1109.6 69.2 L1117 75.3 L1109.6 81.5 L1123 81.5" fill="none" stroke="#444" stroke-width="1.8" stroke-linejoin="bevel"/>
<path d="M1131.80 75.20 L1134.00 77.40 L1136.20 75.20" fill="none" stroke="#444444" stroke-width="1.2"/>
<rect x="1109.6" y="91.5" width="13" height="15" fill="#fff" stroke="#8a8a8a" stroke-width="1"/>
<rect x="1109.1" y="91" width="14" height="3.8" fill="#6e6e6e"/>
<path d="M1116.1 96.6 L1116.1 103.6 M1112.8 100.6 L1116.1 103.8 L1119.4 100.6" fill="none" stroke="#3b78c3" stroke-width="1.7"/>
<path d="M1130.00 98.20 L1132.20 100.40 L1134.40 98.20" fill="none" stroke="#444444" stroke-width="1.2"/>
<path d="M1117.8 115 L1122.3 119 L1113.7 128 L1109.2 124 Z" fill="#e8879c"/>
<path d="M1110.6 122.2 L1115.4 126.4" stroke="#f3f3f3" stroke-width="0.9" fill="none"/>
<path d="M1130.00 121.30 L1132.20 123.50 L1134.40 121.30" fill="none" stroke="#444444" stroke-width="1.2"/>
<text x="1149" y="82.4" font-family="Liberation Sans" font-size="14.8" fill="#3b78c3" stroke="#3b78c3" stroke-width="0.7" textLength="10.8" lengthAdjust="spacingAndGlyphs">A</text>
<text x="1149.8" y="96.6" font-family="Liberation Sans" font-size="15.5" fill="#a15bbf" stroke="#a15bbf" stroke-width="0.7" textLength="9.4" lengthAdjust="spacingAndGlyphs">Z</text>
<path d="M1161.2 78 L1178 78 L1171.2 85.6 L1171.2 92.6 L1167.8 92.6 L1167.8 85.6 Z" fill="#7f7f7f"/>
<rect x="1168.8" y="85.4" width="1.5" height="6.2" fill="#f7f7f7"/>
<path d="M1175.90 124.90 L1178.10 127.10 L1180.30 124.90" fill="none" stroke="#444444" stroke-width="1.2"/>
<path d="M1204.8 86.4 L1195.8 95.4" stroke="#3b78c3" stroke-width="3.2" fill="none" stroke-linecap="round"/>
<circle cx="1211.1" cy="79.7" r="8.6" fill="#fff" stroke="#3b78c3" stroke-width="2.2"/>
<path d="M1223.00 124.90 L1225.20 127.10 L1227.40 124.90" fill="none" stroke="#444444" stroke-width="1.2"/>
<path d="M1276 149 L1282.5 142.6 L1289 149" fill="none" stroke="#444" stroke-width="1.1"/>
<path d="M5.2 165 L18.9 165 L18.9 178.6 L5.2 178.6 Z M7.5 166.3 L7.5 172.1 L16.6 172.1 L16.6 166.3 Z M8.2 174.6 L8.2 178.6 L16.1 178.6 L16.1 174.6 Z M10 176.2 L12.9 176.2 L12.9 178.6 L10 178.6 Z" fill="#8a4ea8" fill-rule="evenodd"/>
<path d="M35.4 169.5 L42.6 169.5 Q47.2 169.5 47.2 173.4 Q47.2 177 43.2 177 L42 177" fill="none" stroke="#3b78c3" stroke-width="2.1"/>
<path d="M38.8 165.4 L34.9 169.5 L38.8 173.4" fill="none" stroke="#3b78c3" stroke-width="2.1"/>
<path d="M55.80 170.40 L58.00 172.60 L60.20 170.40" fill="none" stroke="#444444" stroke-width="1.2"/>
<path d="M86 169.5 L78.8 169.5 Q74.2 169.5 74.2 173.4 Q74.2 177 78.2 177 L79.4 177" fill="none" stroke="#b3b3b3" stroke-width="2.1"/>
<path d="M82.6 165.4 L86.5 169.5 L82.6 173.4" fill="none" stroke="#b3b3b3" stroke-width="2.1"/>
<path d="M94.80 170.40 L97.00 172.60 L99.20 170.40" fill="none" stroke="#c2c2c2" stroke-width="1.2"/>
<rect x="115.6" y="168.8" width="5.6" height="1" fill="#444"/>
<path d="M115.4 171.8 L121.4 171.8 L118.4 175 Z" fill="#444"/>
<path d="M89.00 208.00 L96.00 208.00 L92.50 212.00 Z" fill="#6a6a6a"/>
<rect x="117" y="206" width="2" height="2" fill="#a6a6a6"/>
<rect x="117" y="210" width="2" height="2" fill="#a6a6a6"/>
<rect x="117" y="214" width="2" height="2" fill="#a6a6a6"/>
<path d="M146.6 207.2 L157.4 215.6 M157.4 207.2 L146.6 215.6" fill="none" stroke="#c3c3c3" stroke-width="1.3"/>
<path d="M181.8 211.4 L186 215.2 L194.6 207.2" fill="none" stroke="#c6c6c6" stroke-width="2"/>
<text x="218.4" y="215.2" font-family="Liberation Serif" font-style="italic" font-weight="bold" font-size="14.5" fill="#5a5a5a">f</text>
<text x="223.8" y="216.2" font-family="Liberation Serif" font-style="italic" font-weight="bold" font-size="10" fill="#5a5a5a">x</text>
<path d="M1281 208 L1284.5 211.6 L1288 208" fill="none" stroke="#555" stroke-width="1.4"/>
</svg>

<div class="t" style="top:8.00px;font-size:12px;color:#ffffff;left:220.30px;letter-spacing:-0.413px;">Location_28122022_051915&nbsp;&nbsp;-&nbsp;&nbsp;Excel</div>
<div class="t" style="top:7.00px;font-size:11px;color:#aecbba;left:634.64px;letter-spacing:0.257px;">Table Tools</div>
<div class="t" style="top:7.00px;font-size:12px;color:#1e6b41;left:1056.36px;letter-spacing:0.062px;">Sign in</div>
<div class="t" style="top:39.00px;font-size:12px;color:#ffffff;left:15.30px;letter-spacing:-0.200px;">File</div>
<div class="t" style="top:39.00px;font-size:12px;color:#217346;left:68.30px;letter-spacing:0.712px;">Home</div>
<div class="t" style="top:39.00px;font-size:12px;color:#ffffff;left:128.25px;letter-spacing:-0.111px;">Insert</div>
<div class="t" style="top:39.00px;font-size:12px;color:#ffffff;left:184.70px;letter-spacing:-0.236px;">Page Layout</div>
<div class="t" style="top:39.00px;font-size:12px;color:#ffffff;left:276.30px;letter-spacing:-0.047px;">Formulas</div>
<div class="t" style="top:39.00px;font-size:12px;color:#ffffff;left:352.70px;letter-spacing:-0.480px;">Data</div>
<div class="t" style="top:39.00px;font-size:12px;color:#ffffff;left:403.30px;letter-spacing:-0.426px;">Review</div>
<div class="t" style="top:39.00px;font-size:12px;color:#ffffff;left:467.86px;letter-spacing:-0.363px;">View</div>
<div class="t" style="top:39.00px;font-size:12px;color:#ffffff;left:519.30px;letter-spacing:0.350px;">Help</div>
<div class="t" style="top:39.00px;font-size:12px;color:#ffffff;left:571.86px;letter-spacing:-0.408px;">Team</div>
<div class="t" style="top:39.00px;font-size:12px;color:#ffffff;left:629.16px;letter-spacing:-0.338px;">Table Design</div>
<div class="t" style="top:39.00px;font-size:12px;color:#ffffff;left:749.96px;letter-spacing:0.064px;">Tell me what you want to do</div>
<div class="t" style="top:103.00px;font-size:12px;color:#a6a6a6;left:10.40px;letter-spacing:-0.354px;">Paste</div>
<div class="t" style="top:138.00px;font-size:12px;color:#444444;left:9.93px;letter-spacing:-0.036px;">Clipboard</div>
<div class="t" style="top:77.00px;font-size:12px;color:#262626;left:103.03px;letter-spacing:0.108px;">Calibri</div>
<div class="t" style="top:138.00px;font-size:12px;color:#444444;left:186.40px;letter-spacing:0.133px;">Font</div>
<div class="t" style="top:77.00px;font-size:12px;color:#262626;left:488.31px;letter-spacing:-0.277px;">Wrap Text</div>
<div class="t" style="top:108.00px;font-size:12px;color:#a6a6a6;left:487.70px;letter-spacing:0.018px;">Merge &amp; Center</div>
<div class="t" style="top:138.00px;font-size:12px;color:#444444;left:429.26px;letter-spacing:-0.115px;">Alignment</div>
<div class="t" style="top:77.00px;font-size:12px;color:#262626;left:614.93px;letter-spacing:-0.350px;">General</div>
<div class="t" style="top:138.00px;font-size:12px;color:#444444;left:652.50px;letter-spacing:-0.334px;">Number</div>
<div class="t" style="top:103.00px;font-size:12px;color:#262626;left:773.83px;letter-spacing:0.250px;">Conditional</div>
<div class="t" style="top:119.00px;font-size:12px;color:#262626;left:769.20px;letter-spacing:0.294px;">Formatting</div>
<div class="t" style="top:103.00px;font-size:12px;color:#262626;left:844.70px;letter-spacing:-0.204px;">Format as</div>
<div class="t" style="top:119.00px;font-size:12px;color:#262626;left:852.76px;letter-spacing:-0.494px;">Table</div>
<div class="t" style="top:103.00px;font-size:12px;color:#262626;left:912.93px;letter-spacing:-0.068px;">Cell</div>
<div class="t" style="top:119.00px;font-size:12px;color:#262626;left:901.46px;letter-spacing:-0.401px;">Styles</div>
<div class="t" style="top:138.00px;font-size:12px;color:#444444;left:841.75px;letter-spacing:-0.681px;">Styles</div>
<div class="t" style="top:103.00px;font-size:12px;color:#262626;left:967.36px;letter-spacing:-0.111px;">Insert</div>
<div class="t" style="top:103.00px;font-size:12px;color:#262626;left:1007.50px;letter-spacing:-0.163px;">Delete</div>
<div class="t" style="top:103.00px;font-size:12px;color:#262626;left:1047.60px;letter-spacing:0.120px;">Format</div>
<div class="t" style="top:138.00px;font-size:12px;color:#444444;left:1013.23px;letter-spacing:-0.796px;">Cells</div>
<div class="t" style="top:103.00px;font-size:12px;color:#262626;left:1146.46px;letter-spacing:0.184px;">Sort &amp;</div>
<div class="t" style="top:119.00px;font-size:12px;color:#262626;left:1144.50px;letter-spacing:-0.074px;">Filter</div>
<div class="t" style="top:103.00px;font-size:12px;color:#262626;left:1189.60px;letter-spacing:0.283px;">Find &amp;</div>
<div class="t" style="top:119.00px;font-size:12px;color:#262626;left:1186.56px;letter-spacing:-0.422px;">Select</div>
<div class="t" style="top:138.00px;font-size:12px;color:#444444;left:1148.30px;letter-spacing:0.217px;">Editing</div>
<div class="t" style="top:107.00px;font-size:12px;color:#444444;font-weight:bold;left:106.01px;">B</div>
<div class="t" style="top:107.00px;font-size:12px;color:#444444;font-weight:bold;left:154.18px;">U</div>
<div class="t" style="top:108.00px;font-size:15px;color:#444444;left:655.91px;">%</div>
<div class="t" style="top:100.00px;font-size:22px;color:#444444;font-weight:bold;font-family:'Liberation Serif',serif;left:682.55px;">,</div>
<div class="t" style="top:204.00px;font-size:12px;color:#262626;left:7.60px;letter-spacing:0.293px;">F13</div>
<div class="t" style="top:237.00px;font-size:12.5px;color:#262626;left:75.77px;">A</div>
<div class="t" style="top:237.00px;font-size:12.5px;color:#262626;left:172.08px;">B</div>
<div class="t" style="top:237.00px;font-size:12.5px;color:#262626;left:257.54px;">C</div>
<div class="t" style="top:237.00px;font-size:12.5px;color:#262626;left:360.70px;">D</div>
<div class="t" style="top:237.00px;font-size:12.5px;color:#262626;left:474.50px;">E</div>
<div class="t" style="top:237.00px;font-size:12.5px;color:#217346;left:581.83px;">F</div>
<div class="t" style="top:237.00px;font-size:12.5px;color:#262626;left:689.71px;">G</div>
<div class="t" style="top:237.00px;font-size:12.5px;color:#262626;left:815.39px;">H</div>
<div class="t" style="top:237.00px;font-size:12.5px;color:#262626;left:927.69px;">I</div>
<div class="t" style="top:237.00px;font-size:12.5px;color:#262626;left:1024.55px;">J</div>
<div class="t" style="top:237.00px;font-size:12.5px;color:#262626;left:1118.51px;">K</div>
<div class="t" style="top:237.00px;font-size:12.5px;color:#262626;left:1191.61px;">L</div>
<div class="t" style="top:237.00px;font-size:12.5px;color:#262626;left:1254.70px;">M</div>
<div class="t" style="top:257.00px;font-size:12.5px;color:#262626;left:4.82px;">1</div>
<div class="t" style="top:277.00px;font-size:12.5px;color:#262626;left:5.05px;">2</div>
<div class="t" style="top:297.00px;font-size:12.5px;color:#262626;left:5.00px;">3</div>
<div class="t" style="top:317.00px;font-size:12.5px;color:#262626;left:5.11px;">4</div>
<div class="t" style="top:337.00px;font-size:12.5px;color:#262626;left:4.98px;">5</div>
<div class="t" style="top:357.00px;font-size:12.5px;color:#262626;left:5.03px;">6</div>
<div class="t" style="top:377.00px;font-size:12.5px;color:#262626;left:5.05px;">7</div>
<div class="t" style="top:397.00px;font-size:12.5px;color:#262626;left:5.05px;">8</div>
<div class="t" style="top:417.00px;font-size:12.5px;color:#262626;left:5.03px;">9</div>
<div class="t" style="top:437.00px;font-size:12.5px;color:#262626;left:1.98px;">10</div>
<div class="t" style="top:457.00px;font-size:12.5px;color:#262626;left:2.52px;">11</div>
<div class="t" style="top:477.00px;font-size:12.5px;color:#262626;left:2.03px;">12</div>
<div class="t" style="top:497.00px;font-size:12.5px;color:#217346;left:2.02px;">13</div>
<div class="t" style="top:517.00px;font-size:12.5px;color:#262626;left:1.89px;">14</div>
<div class="t" style="top:537.00px;font-size:12.5px;color:#262626;left:2.02px;">15</div>
<div class="t" style="top:557.00px;font-size:12.5px;color:#262626;left:2.03px;">16</div>
<div class="t" style="top:577.00px;font-size:12.5px;color:#262626;left:2.03px;">17</div>
<div class="t" style="top:597.00px;font-size:12.5px;color:#262626;left:2.02px;">18</div>
<div class="t" style="top:617.00px;font-size:12.5px;color:#262626;left:2.03px;">19</div>
<div class="t" style="top:257.00px;font-size:12.5px;color:#ffffff;font-weight:bold;left:23.95px;letter-spacing:-0.269px;width:97.05px;overflow:hidden;">LOCATIONCODE</div>
<div class="t" style="top:257.00px;font-size:12.5px;color:#ffffff;font-weight:bold;left:140.95px;letter-spacing:-0.331px;width:56.05px;overflow:hidden;">BINCODE</div>
<div class="t" style="top:257.00px;font-size:12.5px;color:#ffffff;font-weight:bold;left:217.05px;letter-spacing:-0.424px;width:74.95px;overflow:hidden;">SHELFNAME</div>
<div class="t" style="top:257.00px;font-size:12.5px;color:#ffffff;font-weight:bold;left:312.05px;letter-spacing:-0.149px;width:91.95px;overflow:hidden;">SECTIONNAME</div>
<div class="t" style="top:257.00px;font-size:12.5px;color:#ffffff;font-weight:bold;left:423.95px;letter-spacing:-0.290px;width:95.05px;overflow:hidden;">PASSAGENAME</div>
<div class="t" style="top:257.00px;font-size:12.5px;color:#ffffff;font-weight:bold;left:538.96px;letter-spacing:-0.164px;width:79.04px;overflow:hidden;">FLOORNAME</div>
<div class="t" style="top:257.00px;font-size:12.5px;color:#ffffff;font-weight:bold;left:637.96px;letter-spacing:0.083px;width:98.04px;overflow:hidden;">BUILDINGNAME</div>
<div class="t" style="top:257.00px;font-size:12.5px;color:#ffffff;font-weight:bold;left:756.70px;letter-spacing:-0.406px;width:112.30px;overflow:hidden;">WAREHOUSECODE</div>
<div class="t" style="top:257.00px;font-size:12.5px;color:#ffffff;font-weight:bold;left:889.05px;letter-spacing:-0.681px;width:65.95px;overflow:hidden;">SORTCODE</div>
<div class="t" style="top:257.00px;font-size:12.5px;color:#ffffff;font-weight:bold;left:975.24px;letter-spacing:-0.582px;width:89.76px;overflow:hidden;">CAPACITYTYPE</div>
<div class="t" style="top:257.00px;font-size:12.5px;color:#ffffff;font-weight:bold;left:1085.24px;letter-spacing:-0.542px;width:60.76px;overflow:hidden;">CAPACITY</div>
<div class="t" style="top:257.00px;font-size:12.5px;color:#ffffff;font-weight:bold;left:1165.96px;letter-spacing:-0.162px;width:44.04px;overflow:hidden;">BINHEIGHT</div>
<div class="t" style="top:257.00px;font-size:12.5px;color:#ffffff;font-weight:bold;left:1229.96px;letter-spacing:-0.281px;width:44.04px;overflow:hidden;">BINLENGTH</div>
<div class="t" style="top:277.00px;font-size:12.5px;color:#000000;left:24.17px;letter-spacing:-0.154px;">OPSW9</div>
<div class="t" style="top:277.00px;font-size:12.5px;color:#000000;left:141.07px;letter-spacing:-0.129px;">OPSW9</div>
<div class="t" style="top:277.00px;font-size:12.5px;color:#000000;left:216.22px;letter-spacing:-0.280px;">SH1</div>
<div class="t" style="top:277.00px;font-size:12.5px;color:#000000;left:311.41px;letter-spacing:-1.043px;">SEC1</div>
<div class="t" style="top:277.00px;font-size:12.5px;color:#000000;left:423.50px;letter-spacing:0.575px;">PATH1</div>
<div class="t" style="top:277.00px;font-size:12.5px;color:#000000;left:538.60px;letter-spacing:-0.615px;">F1</div>
<div class="t" style="top:277.00px;font-size:12.5px;color:#000000;left:637.70px;letter-spacing:0.455px;">B1</div>
<div class="t" style="top:277.00px;font-size:13px;color:#000000;left:755.83px;letter-spacing:0.363px;">OP_Warehouse</div>
<div class="t" style="top:277.00px;font-size:12.5px;color:#000000;left:963.33px;">1</div>
<div class="t" style="top:277.00px;font-size:13px;color:#000000;left:974.70px;letter-spacing:0.957px;">Number</div>
<div class="t" style="top:277.00px;font-size:12.5px;color:#000000;left:1139.30px;letter-spacing:0.327px;">100</div>
<div class="t" style="top:277.00px;font-size:12.5px;color:#000000;left:1218.15px;">0</div>
</body>
</html>
